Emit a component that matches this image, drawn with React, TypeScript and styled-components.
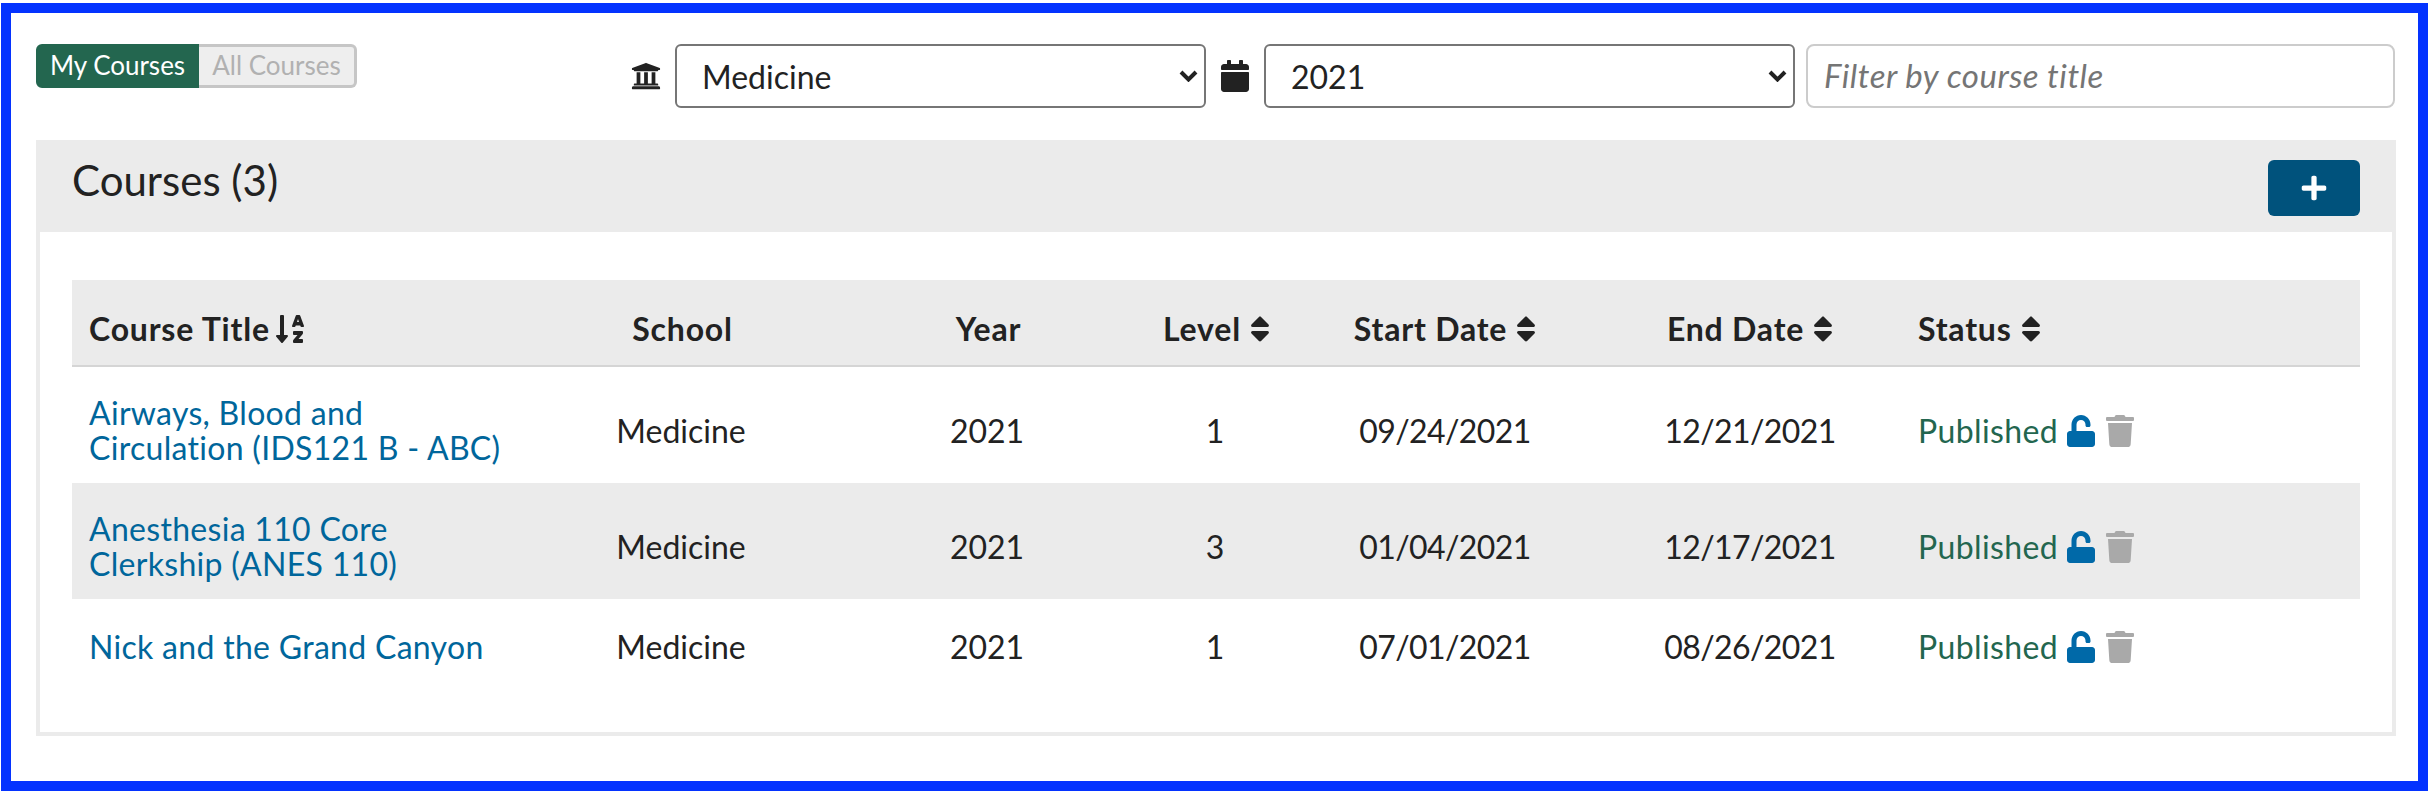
import React from "react";
import styled, { createGlobalStyle } from "styled-components";
import {
  FaUniversity,
  FaCalendar,
  FaPlus,
  FaSort,
  FaSortAlphaDown,
  FaUnlock,
  FaTrash,
} from "react-icons/fa";

const GlobalStyle = createGlobalStyle`
  html, body {
    margin: 0;
    background: #fff;
  }
  * {
    box-sizing: border-box;
  }
`;

const Frame = styled.div`
  margin: 3px 0 7px 1px;
  width: 2427px;
  height: 788px;
  border: 10px solid #0433ff;
  padding: 31px 22px 0 25px;
  font-family: Lato, "Noto Sans", sans-serif;
  font-size: 32px;
  color: #222;
  background: #fff;
`;

const Toolbar = styled.div`
  display: flex;
  justify-content: space-between;
  height: 64px;
  margin-bottom: 32px;
`;

const Toggle = styled.div`
  display: flex;
  height: 44px;
  font-size: 26px;
`;

const ToggleButton = styled.div<{ $active?: boolean }>`
  display: flex;
  align-items: center;
  justify-content: center;
  width: ${(p) => (p.$active ? "163px" : "158px")};
  padding-bottom: 3px;
  background: ${(p) => (p.$active ? "#23664f" : "#eeeeee")};
  color: ${(p) => (p.$active ? "#fff" : "#b1b1b1")};
  border: ${(p) => (p.$active ? "2px" : "3px")} solid ${(p) => (p.$active ? "#23664f" : "#c6c6c6")};
  border-radius: ${(p) => (p.$active ? "6px 0 0 6px" : "0 6px 6px 0")};
  border-left-width: ${(p) => (p.$active ? "2px" : "0")};
`;

const Filters = styled.div`
  display: flex;
  align-items: center;
  margin-right: 1px;
`;

const FilterIcon = styled.span<{ $gap: number; $size: number }>`
  display: flex;
  font-size: ${(p) => p.$size}px;
  margin-right: ${(p) => p.$gap}px;
  color: #222;
`;

const Select = styled.select<{ $gap: number }>`
  appearance: none;
  width: 531px;
  height: 64px;
  padding: 0 25px;
  margin-right: ${(p) => p.$gap}px;
  border: 2px solid #767676;
  border-radius: 6px;
  background: #fff url("data:image/svg+xml,%3Csvg xmlns='http://www.w3.org/2000/svg' width='19' height='12' viewBox='0 0 19 12'%3E%3Cpath d='M2 2l7.5 7.5L17 2' fill='none' stroke='%23222' stroke-width='4'/%3E%3C/svg%3E") no-repeat right 6px center;
  color: #222;
  font-family: inherit;
  font-size: 32px;
`;

const FilterInput = styled.input`
  width: 589px;
  height: 64px;
  padding: 0 16px 2px;
  border: 2px solid #cccccc;
  border-radius: 8px;
  color: #222;
  font-family: inherit;
  font-size: 33px;
  letter-spacing: 0.5px;

  &::placeholder {
    color: #757575;
    font-style: italic;
    opacity: 1;
  }
`;

const PanelHeader = styled.div`
  display: flex;
  justify-content: space-between;
  height: 92px;
  padding: 20px 36px 0;
  background: #ebebeb;
`;

const PanelTitle = styled.h2`
  margin: 0;
  font-size: 42px;
  line-height: 40px;
  font-weight: 400;
`;

const AddButton = styled.button`
  display: flex;
  align-items: center;
  justify-content: center;
  width: 92px;
  height: 56px;
  border: 0;
  border-radius: 6px;
  background: #00527c;
  color: #fff;
  font-size: 28px;
`;

const PanelBody = styled.div`
  height: 504px;
  padding: 48px 32px 0;
  border: 4px solid #ebebeb;
  border-top: 0;
`;

const Table = styled.table`
  width: 2288px;
  table-layout: fixed;
  border-collapse: collapse;
`;

const Col = styled.col<{ $w: number }>`
  width: ${(p) => p.$w}px;
`;

const HeadRow = styled.tr`
  height: 86px;
  background: #ebebeb;
  border-bottom: 2px solid #d5d5d5;
`;

const Th = styled.th<{ $left?: boolean; $shift?: number }>`
  padding: 0 17px 18px ${(p) => 17 + (p.$shift ?? 0)}px;
  vertical-align: bottom;
  text-align: ${(p) => (p.$left ? "left" : "center")};
  font-size: 32px;
  line-height: 36px;
  letter-spacing: 0.8px;
  font-weight: 700;
  white-space: nowrap;
`;

const SortIcon = styled.span<{ $gap: number }>`
  display: inline-block;
  margin-left: ${(p) => p.$gap}px;
  font-size: 32px;
  line-height: 0;
  vertical-align: -4px;

  svg {
    display: block;
  }
`;

const Row = styled.tr<{ $shaded?: boolean }>`
  background: ${(p) => (p.$shaded ? "#ebebeb" : "#fff")};

  &:last-child td {
    padding-top: 30px;
    padding-bottom: 32px;
  }
`;

const Td = styled.td<{ $left?: boolean }>`
  padding: 28px 17px 18px;
  text-align: ${(p) => (p.$left ? "left" : "center")};
  line-height: 35px;
`;

const DateCell = styled(Td)`
  letter-spacing: -0.6px;
`;

const CourseLink = styled.a`
  color: #00669b;
  text-decoration: none;
  letter-spacing: 0.3px;
`;

const StatusText = styled.span`
  color: #23664f;
  letter-spacing: 0.4px;
`;

const ActionIcon = styled.span<{ $color: string }>`
  display: inline-block;
  margin-left: 7px;
  color: ${(p) => p.$color};
  font-size: 32px;
  line-height: 0;
  vertical-align: -4px;

  svg {
    display: block;
  }
`;

const widths = [455, 308, 304, 152, 308, 302, 459];

const columns = [
  { label: "School", shift: 3 },
  { label: "Year", shift: 3 },
  { label: "Level", sort: true, shift: 7 },
  { label: "Start Date", sort: true, shift: 6 },
  { label: "End Date", sort: true, shift: 6 },
];

const courses = [
  { title: "Airways, Blood and Circulation (IDS121 B - ABC)", level: 1, start: "09/24/2021", end: "12/21/2021" },
  { title: "Anesthesia 110 Core Clerkship (ANES 110)", level: 3, start: "01/04/2021", end: "12/17/2021" },
  { title: "Nick and the Grand Canyon", level: 1, start: "07/01/2021", end: "08/26/2021" },
];

export default function App() {
  return (
    <Frame>
      <GlobalStyle />
      <Toolbar>
        <Toggle>
          <ToggleButton $active>My Courses</ToggleButton>
          <ToggleButton>All Courses</ToggleButton>
        </Toggle>
        <Filters>
          <FilterIcon $gap={14} $size={30}>
            <FaUniversity />
          </FilterIcon>
          <Select $gap={13} defaultValue="Medicine">
            <option>Medicine</option>
          </Select>
          <FilterIcon $gap={13} $size={32}>
            <FaCalendar />
          </FilterIcon>
          <Select $gap={11} defaultValue="2021">
            <option>2021</option>
          </Select>
          <FilterInput placeholder="Filter by course title" />
        </Filters>
      </Toolbar>
      <PanelHeader>
        <PanelTitle>Courses (3)</PanelTitle>
        <AddButton>
          <FaPlus />
        </AddButton>
      </PanelHeader>
      <PanelBody>
        <Table>
          <colgroup>
            {widths.map((w, i) => (
              <Col key={i} $w={w} />
            ))}
          </colgroup>
          <thead>
            <HeadRow>
              <Th $left>
                Course Title
                <SortIcon $gap={4}>
                  <FaSortAlphaDown />
                </SortIcon>
              </Th>
              {columns.map((c) => (
                <Th key={c.label} $shift={c.shift}>
                  {c.label}
                  {c.sort && (
                    <SortIcon $gap={3}>
                      <FaSort />
                    </SortIcon>
                  )}
                </Th>
              ))}
              <Th $left>
                Status
                <SortIcon $gap={3}>
                  <FaSort />
                </SortIcon>
              </Th>
            </HeadRow>
          </thead>
          <tbody>
            {courses.map((c, i) => (
              <Row key={c.title} $shaded={i === 1}>
                <Td $left>
                  <CourseLink href="#">{c.title}</CourseLink>
                </Td>
                <Td>Medicine</Td>
                <Td>2021</Td>
                <Td>{c.level}</Td>
                <DateCell>{c.start}</DateCell>
                <DateCell>{c.end}</DateCell>
                <Td $left>
                  <StatusText>Published</StatusText>
                  <ActionIcon $color="#0069a8">
                    <FaUnlock />
                  </ActionIcon>
                  <ActionIcon $color="#a9a9a9">
                    <FaTrash />
                  </ActionIcon>
                </Td>
              </Row>
            ))}
          </tbody>
        </Table>
      </PanelBody>
    </Frame>
  );
}
